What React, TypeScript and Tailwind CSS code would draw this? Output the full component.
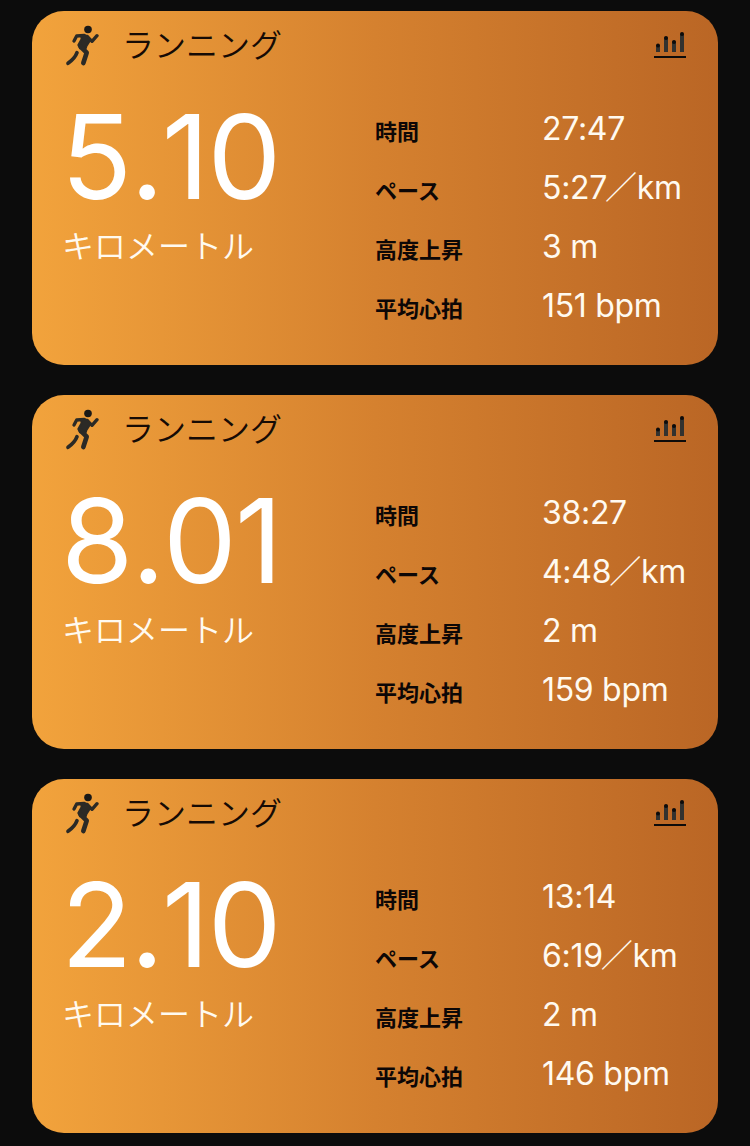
import clsx from "clsx";

const jpFont = "font-['Noto_Sans_CJK_JP',sans-serif]";
const numFont = "font-['Inter','Noto_Sans_CJK_JP',sans-serif]";

const workouts = [
    { distance: "5.10", time: "27:47", pace: ["5:27", "km"], climb: "3 m", heart: "151 bpm" },
    { distance: "8.01", time: "38:27", pace: ["4:48", "km"], climb: "2 m", heart: "159 bpm" },
    { distance: "2.10", time: "13:14", pace: ["6:19", "km"], climb: "2 m", heart: "146 bpm" },
];

function RunnerIcon() {
    return (
        <svg width="34" height="42" viewBox="30 30 102 126" fill="none" strokeLinecap="round" strokeLinejoin="round">
            <g stroke="#2b2a26">
                <ellipse cx="99" cy="43.5" rx="11.5" ry="11" fill="#1a1917" stroke="none" />
                <path d="M57 78L65 63L88 61" strokeWidth="10" />
                <path d="M99 67L111 79L126 62" strokeWidth="10" />
                <path d="M78 61L97 62L106 75L94 94L92 100L75 100L70 90L80 72Z" fill="#2b2a26" strokeWidth="6" />
                <path d="M78 96L95 113L85 144" strokeWidth="14" />
                <path d="M66 113Q60 130 39 145" strokeWidth="11" />
            </g>
        </svg>
    );
}

function BarsIcon() {
    return (
        <svg width="32" height="26" viewBox="0 0 32 26" fill="none">
            <g stroke="#33322f" strokeWidth="4">
                <path d="M4 20V13M12 20V5.5M20 20V9.5M28 20V2" />
            </g>
            <g fill="#0d0b0a">
                <circle cx="4" cy="13.5" r="2" />
                <circle cx="12" cy="6" r="2" />
                <circle cx="20" cy="10" r="2" />
                <circle cx="28" cy="2" r="2" />
            </g>
            <path d="M0 25H32" stroke="#0d0b0a" strokeWidth="2" />
        </svg>
    );
}

function Stat({ label, children }: { label: string; children: React.ReactNode }) {
    return (
        <div className="flex h-[59px] items-center">
            <span className={clsx(jpFont, "w-[167px] shrink-0 pt-[3px] text-[22px] font-bold leading-[22px] text-[#0d0706]")}>{label}</span>
            <span className={clsx(numFont, "flex items-center whitespace-pre pt-px text-[32px] leading-[40px] tracking-[-0.3px] text-[#fffaf0]")}>{children}</span>
        </div>
    );
}

function WorkoutCard({ workout }: { workout: (typeof workouts)[number] }) {
    return (
        <section className="h-[354px] rounded-[32px] bg-linear-to-r from-[#f2a33c] via-[#d5812f] to-[#ba6625] px-8">
            <header className="flex h-[70px] items-start pt-[14px]">
                <div className="w-[58px] pl-px">
                    <RunnerIcon />
                </div>
                <h2 className={clsx(jpFont, "-mt-[2px] flex-1 text-[32px] font-[350] leading-[40px] text-[#160b05]")}>ランニング</h2>
                <div className="pt-[7px]">
                    <BarsIcon />
                </div>
            </header>
            <div className="flex">
                <div className="w-[311px] shrink-0 pt-[16px]">
                    <div className={clsx(numFont, "-ml-[3px] text-[117px] leading-[120px] tracking-[-2px] text-white [font-kerning:none]")}>{workout.distance}</div>
                    <div className={clsx(jpFont, "-ml-0.5 mt-[7px] text-[32px] font-[350] leading-[40px] text-[#fffaf0]")}>キロメートル</div>
                </div>
                <div className="shrink-0 pt-[18px]">
                    <Stat label="時間">{workout.time}</Stat>
                    <Stat label="ペース">
                        {workout.pace[0]}
                        <span className={clsx(jpFont, "-mt-1.5 -ml-0.5 font-normal leading-[40px]")}>／</span>
                        {workout.pace[1]}
                    </Stat>
                    <Stat label="高度上昇">{workout.climb}</Stat>
                    <Stat label="平均心拍">{workout.heart}</Stat>
                </div>
            </div>
        </section>
    );
}

export default function App() {
    return (
        <main lang="ja" className="flex h-[1146px] w-[750px] flex-col gap-[30px] overflow-hidden bg-[#0c0c0c] px-8 pt-[11px]">
            {workouts.map((workout) => (
                <WorkoutCard key={workout.distance} workout={workout} />
            ))}
        </main>
    );
}
